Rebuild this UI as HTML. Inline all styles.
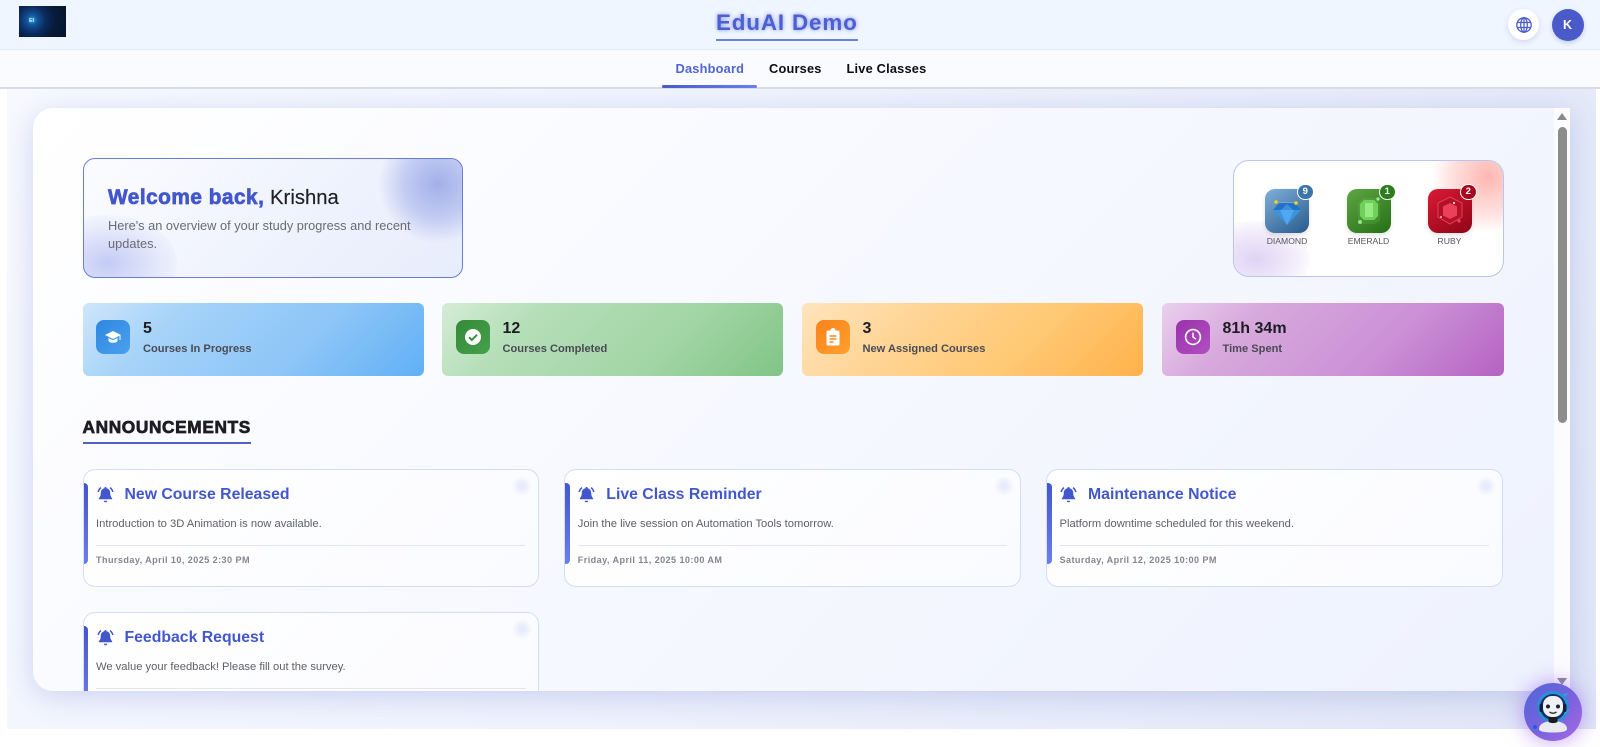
<!DOCTYPE html>
<html><head><meta charset="utf-8"><title>EduAI Demo</title>
<style>
*{box-sizing:border-box;margin:0;padding:0}
html,body{width:1600px;height:747px;overflow:hidden;background:#fff;font-family:"Liberation Sans",Arial,sans-serif;position:relative}
.a{position:absolute;white-space:nowrap}
#main{left:7px;top:88px;width:1589px;height:641px;background:linear-gradient(115deg,#f7f9ff 0%,#eef2fd 45%,#e0e6f6 100%)}
#hdr{left:0;top:0;width:1600px;height:50px;background:#f0f6ff;border-bottom:1px solid #e2e7f2}
#nav{left:0;top:50px;width:1600px;height:39px;background:#fafbff;border-bottom:2px solid #d9dce6}
#title{left:716px;top:9px;width:142px;height:32px;font-size:22.4px;font-weight:700;letter-spacing:.85px;color:#4d60cf;text-shadow:0 0 4px rgba(80,100,225,.7);border-bottom:2px solid #6b80e2;line-height:28px}
.nv{top:61px;font-size:12.8px;font-weight:700;letter-spacing:.2px;color:#0c0c12;line-height:16px}
#card{left:33px;top:108px;width:1537px;height:583px;border-radius:20px 0 0 20px;background:linear-gradient(135deg,#ffffff 0%,#f6f8ff 50%,#eef2fd 100%);box-shadow:0 6px 28px rgba(70,90,190,.22);overflow:hidden}
#sb{left:1554px;top:108px;width:16px;height:583px;background:#fcfcff}
#welcome{left:82.5px;top:158px;width:380px;height:120px;border:1px solid #6a7dd6;border-radius:12px;overflow:hidden;background:linear-gradient(135deg,#fbfcff 0%,#eef2fd 60%,#e8edfc 100%)}
#gems{left:1233px;top:160px;width:271px;height:116.5px;border:1px solid #b9c5ee;border-radius:16px;background:#fff;overflow:hidden}
.stat{top:303px;width:341px;height:73px;border-radius:6px}
.ic{position:absolute;left:13.5px;top:17px;width:34px;height:34px;border-radius:8px}
.ic svg{position:absolute;left:8px;top:8px}
.num{position:absolute;left:60.5px;top:15.5px;font-size:16px;font-weight:700;line-height:20px;color:#1c1c22;white-space:nowrap}
.lbl{position:absolute;left:60.5px;top:39px;font-size:11.1px;font-weight:700;letter-spacing:0;line-height:14px;color:#4a4a55;white-space:nowrap}
.ann{width:456.5px;height:117.5px;background:linear-gradient(135deg,#fff,#fafbff);border:1px solid #d3dcfb;border-radius:12px}
.ann .st{position:absolute;left:0;top:13px;width:4.5px;height:81px;background:linear-gradient(180deg,#4357cc,#6a7ef0);border-radius:0 4px 4px 0}
.ann .dot{position:absolute;right:6px;top:6px;width:20px;height:20px;border-radius:50%;background:radial-gradient(circle,rgba(100,115,225,.12) 20%,rgba(100,115,225,0) 72%)}
.ann svg{position:absolute;left:13px;top:16px}
.ann h3{position:absolute;left:41px;top:15px;font-size:15.8px;font-weight:700;line-height:20px;color:#4357cc;white-space:nowrap}
.ann p{position:absolute;left:12.5px;top:46.5px;font-size:11.2px;line-height:14px;color:#5e5e66;white-space:nowrap}
.ann hr{position:absolute;left:12.5px;right:12.5px;top:75px;border:0;border-top:1px solid #e2e4ee}
.ann small{position:absolute;left:12.5px;top:84px;font-size:9.1px;font-weight:700;letter-spacing:.42px;line-height:12px;color:#85858e;white-space:nowrap}
.gem{top:189px;width:44px;height:44px;border-radius:10px;box-shadow:0 2px 5px rgba(0,0,0,.12)}
.bd{top:183.5px;width:16.5px;height:16.5px;border-radius:50%;border:1px solid #fff;color:#fff;font-size:9.5px;font-weight:700;text-align:center;line-height:14.5px}
.gl{top:236px;width:70px;text-align:center;font-size:8.6px;line-height:11px;color:#55555c}
</style></head><body>

<div class="a" id="main"></div>
<div class="a" id="card"></div>
<div class="a" id="sb"></div>

<!-- scrollbar -->
<div class="a" style="left:1556.7px;top:113px;width:0;height:0;border-left:5.3px solid transparent;border-right:5.3px solid transparent;border-bottom:7.5px solid #8a8a8a"></div>
<div class="a" style="left:1557.5px;top:127px;width:9px;height:296px;background:#8c8c8c;border-radius:5px"></div>
<div class="a" style="left:1557px;top:678px;width:0;height:0;border-left:5px solid transparent;border-right:5px solid transparent;border-top:7px solid #8a8a8a"></div>

<!-- welcome -->
<div class="a" id="welcome">
  <div style="position:absolute;left:294px;top:-35px;width:120px;height:120px;border-radius:50%;background:radial-gradient(circle,rgba(90,110,215,.5) 0%,rgba(90,110,215,.28) 40%,rgba(90,110,215,0) 70%)"></div>
  <div style="position:absolute;left:-47px;top:56px;width:140px;height:96px;border-radius:50%;background:radial-gradient(ellipse,rgba(90,110,225,.32) 0%,rgba(90,110,225,.13) 45%,rgba(90,110,225,.03) 70%,rgba(90,110,225,0) 74%)"></div>
  <div class="a" style="left:24.5px;top:27px;font-size:20.3px;line-height:24px;color:#202024"><b style="color:#4357cc;-webkit-text-stroke:.7px #4357cc;letter-spacing:.5px;font-size:20.8px">Welcome back,</b> <span style="-webkit-text-stroke:.15px #202024">Krishna</span></div>
  <div class="a" style="left:24.5px;top:58px;font-size:12.8px;line-height:18px;color:#6b6b73;white-space:normal;width:325px">Here's an overview of your study progress and recent updates.</div>
</div>

<!-- gems -->
<div class="a" id="gems">
  <div style="position:absolute;left:199px;top:-39px;width:110px;height:110px;border-radius:50%;background:radial-gradient(circle,rgba(255,110,100,.5) 0%,rgba(255,120,110,.2) 50%,rgba(255,120,110,0) 72%)"></div>
  <div style="position:absolute;left:-34px;top:60px;width:110px;height:76px;border-radius:50%;background:radial-gradient(ellipse,rgba(150,110,220,.3) 0%,rgba(150,110,220,.13) 50%,rgba(150,110,220,.04) 70%,rgba(150,110,220,0) 73%)"></div>
</div>
<div class="a gem" style="left:1265px;background:linear-gradient(145deg,#7fb0d8,#27598d)">
  <svg width="44" height="44" viewBox="0 0 44 44"><path d="M14 14H30L36 21 22 36 8 21z" fill="#3c94e0"/><path d="M14 14H30L36 21H8z" fill="#2272c6"/><path d="M22 15L16 21H28z" fill="#3b8fdc"/><path d="M15 21H29L22 36z" fill="#52a8ee"/><path d="M11 13L31 14" stroke="#9bc0da" stroke-width=".5"/><circle cx="11" cy="13" r="1.8" fill="#f6d21f"/><circle cx="31" cy="14" r="1.8" fill="#f6d21f"/></svg>
</div>
<div class="a gem" style="left:1346.5px;background:linear-gradient(145deg,#5fa544,#256f17)">
  <svg width="44" height="44" viewBox="0 0 44 44"><path d="M16 9h12l5 5v18l-5 3H16l-5-3V14z" fill="#7ad465" opacity=".18"/><path d="M17 11h10l4 4v12l-4 4H17l-4-4V15z" fill="#6fd05a"/><path d="M18 14h8v14h-8z" fill="#96ec82"/><circle cx="13" cy="33" r="2" fill="#8fe87a"/><circle cx="31" cy="10" r="1.7" fill="#8fe87a"/></svg>
</div>
<div class="a gem" style="left:1428px;background:linear-gradient(145deg,#db1a35,#8d0516)">
  <svg width="44" height="44" viewBox="0 0 44 44"><path d="M22 8l12 6v14l-12 7-12-7V14z" fill="#b5102a" stroke="#e43f58" stroke-width="1"/><path d="M22 14l7 3.5v9L22 30l-7-3.5v-9z" fill="#ea4058"/><circle cx="26" cy="14" r="1" fill="#fff"/><circle cx="13" cy="28" r="1" fill="#fbb"/><circle cx="31" cy="32" r="1.6" fill="#f0405f"/></svg>
</div>
<div class="a bd" style="left:1297px;background:#3c75a8">9</div>
<div class="a bd" style="left:1379px;background:#2d7d1f">1</div>
<div class="a bd" style="left:1460px;background:#a8081d">2</div>
<div class="a gl" style="left:1252px">DIAMOND</div>
<div class="a gl" style="left:1333.5px">EMERALD</div>
<div class="a gl" style="left:1414.5px">RUBY</div>

<!-- stats -->
<div class="a stat" style="left:82.5px;background:linear-gradient(135deg,#cfe6fb 0%,#a6d3f8 25%,#8cc5f7 65%,#60b0f5 100%)">
  <div class="ic" style="background:linear-gradient(135deg,#2f86e0,#4ba1ee)"><svg width="18" height="18" viewBox="0 0 18 18"><path d="M9 3L1 7l8 4 8-4z" fill="#fff"/><path d="M4.5 10v2.6c0 1.2 2 2.2 4.5 2.2s4.5-1 4.5-2.2V10L9 12.2z" fill="#fff"/><path d="M16 7.500v4.500" stroke="#fff" stroke-width="1"/></svg></div>
  <div class="num">5</div><div class="lbl">Courses In Progress</div>
</div>
<div class="a stat" style="left:442px;background:linear-gradient(135deg,#d5ecd6 0%,#b5dfb8 25%,#a2d5a5 65%,#80c585 100%)">
  <div class="ic" style="background:linear-gradient(135deg,#338a38,#47a04c)"><svg width="18" height="18" viewBox="0 0 18 18"><circle cx="9" cy="9" r="8" fill="#fff"/><path d="M5 9.2l2.8 2.8L13 6.8" fill="none" stroke="#378f3c" stroke-width="2"/></svg></div>
  <div class="num">12</div><div class="lbl">Courses Completed</div>
</div>
<div class="a stat" style="left:802px;background:linear-gradient(135deg,#ffe4bd 0%,#ffd596 30%,#ffc873 65%,#ffb14a 100%)">
  <div class="ic" style="background:linear-gradient(135deg,#f9821a,#ffa02f)"><svg width="18" height="18" viewBox="0 0 18 18"><path d="M4 2.5h2.5a2.5 2.5 0 015 0H14a1.5 1.5 0 011.5 1.5v12a1.500 1.500 0 01-1.500 1.500H4A1.500 1.500 0 012.500 16V4A1.500 1.500 0 014 2.500z" fill="#fff"/><path d="M5.5 8h7M5.5 11h7M5.5 14h4" stroke="#f98a20" stroke-width="1.5"/></svg></div>
  <div class="num">3</div><div class="lbl">New Assigned Courses</div>
</div>
<div class="a stat" style="left:1162px;width:342px;background:linear-gradient(135deg,#ead0ee 0%,#d7a9dc 25%,#cb90d6 65%,#b562c2 100%)">
  <div class="ic" style="background:linear-gradient(135deg,#9a32ab,#b14fc0)"><svg width="18" height="18" viewBox="0 0 18 18"><circle cx="9" cy="9" r="7.4" fill="none" stroke="#fff" stroke-width="1.6"/><path d="M9 4.6V9l3 2.2" fill="none" stroke="#fff" stroke-width="1.5"/></svg></div>
  <div class="num">81h 34m</div><div class="lbl">Time Spent</div>
</div>

<!-- announcements heading -->
<div class="a" style="left:82.5px;top:416.5px;width:168.5px;height:27.5px;font-size:17.3px;font-weight:700;letter-spacing:.62px;line-height:20px;color:#1d1d22;-webkit-text-stroke:.7px #1d1d22;border-bottom:2px solid #4f62c8">ANNOUNCEMENTS</div>

<!-- announcement cards -->
<div class="a ann" style="left:82.5px;top:469px"><div class="st"></div><div class="dot"></div>
  <svg width="17" height="17" viewBox="0 0 17 17"><path d="M8.5 1a1.1 1.1 0 011.1 1.2c2.3.5 3.6 2.4 3.6 4.6 0 3.2 1 4.4 2 5.600v.9H1.800v-.9c1-1.200 2-2.400 2-5.600 0-2.200 1.300-4.100 3.600-4.600A1.100 1.100 0 018.500 1zM6.900 14.700h3.200a1.600 1.600 0 01-3.200 0z" fill="#4357cc"/><path d="M4 1.600C2.400 2.800 1.500 4.300 1.200 6M13 1.600c1.600 1.200 2.500 2.700 2.800 4.400" fill="none" stroke="#4357cc" stroke-width="1.500"/></svg>
  <h3>New Course Released</h3><p>Introduction to 3D Animation is now available.</p><hr><small>Thursday, April 10, 2025 2:30 PM</small></div>
<div class="a ann" style="left:564.3px;top:469px"><div class="st"></div><div class="dot"></div>
  <svg width="17" height="17" viewBox="0 0 17 17"><path d="M8.500 1a1.100 1.100 0 011.100 1.200c2.300.5 3.600 2.400 3.600 4.600 0 3.200 1 4.400 2 5.600v.9H1.800v-.9c1-1.200 2-2.400 2-5.600 0-2.200 1.300-4.100 3.600-4.600A1.100 1.100 0 018.500 1zM6.900 14.700h3.200a1.600 1.600 0 01-3.200 0z" fill="#4357cc"/><path d="M4 1.600C2.400 2.800 1.500 4.300 1.200 6M13 1.600c1.600 1.200 2.500 2.700 2.800 4.400" fill="none" stroke="#4357cc" stroke-width="1.500"/></svg>
  <h3>Live Class Reminder</h3><p>Join the live session on Automation Tools tomorrow.</p><hr><small>Friday, April 11, 2025 10:00 AM</small></div>
<div class="a ann" style="left:1046px;top:469px"><div class="st"></div><div class="dot"></div>
  <svg width="17" height="17" viewBox="0 0 17 17"><path d="M8.500 1a1.100 1.100 0 011.100 1.200c2.300.5 3.600 2.400 3.600 4.600 0 3.200 1 4.400 2 5.600v.9H1.800v-.9c1-1.200 2-2.400 2-5.600 0-2.200 1.300-4.100 3.600-4.600A1.100 1.100 0 018.500 1zM6.900 14.700h3.200a1.600 1.600 0 01-3.200 0z" fill="#4357cc"/><path d="M4 1.600C2.400 2.800 1.500 4.300 1.200 6M13 1.600c1.600 1.200 2.500 2.700 2.800 4.400" fill="none" stroke="#4357cc" stroke-width="1.500"/></svg>
  <h3>Maintenance Notice</h3><p>Platform downtime scheduled for this weekend.</p><hr><small>Saturday, April 12, 2025 10:00 PM</small></div>
<div class="a" style="left:82.5px;top:612px;width:456.5px;height:79px;overflow:hidden">
  <div class="a ann" style="left:0;top:0"><div class="st"></div><div class="dot"></div>
  <svg width="17" height="17" viewBox="0 0 17 17"><path d="M8.500 1a1.100 1.100 0 011.100 1.200c2.300.5 3.600 2.400 3.600 4.600 0 3.200 1 4.400 2 5.600v.9H1.800v-.9c1-1.200 2-2.400 2-5.600 0-2.200 1.300-4.100 3.600-4.600A1.100 1.100 0 018.500 1zM6.900 14.700h3.200a1.600 1.600 0 01-3.200 0z" fill="#4357cc"/><path d="M4 1.600C2.400 2.800 1.500 4.300 1.200 6M13 1.600c1.600 1.200 2.500 2.700 2.800 4.400" fill="none" stroke="#4357cc" stroke-width="1.500"/></svg>
  <h3>Feedback Request</h3><p>We value your feedback! Please fill out the survey.</p><hr></div>
</div>

<!-- header -->
<div class="a" id="hdr"></div>
<div class="a" style="left:19px;top:6px;width:47px;height:31px;background:radial-gradient(circle at 28% 45%,#2d9ad6 0%,#11549a 14%,#0b2a5c 36%,#071a38 62%,#06152c 100%)"><div style="position:absolute;left:10px;top:11px;font-size:5.5px;font-weight:700;color:#cfeefa;line-height:8px">EI</div></div>
<div class="a" id="title">EduAI Demo</div>
<div class="a" style="left:1508px;top:9px;width:31px;height:31px;border-radius:50%;background:#fff;box-shadow:0 2px 6px rgba(60,80,160,.18)">
  <svg style="position:absolute;left:7.5px;top:7.5px" width="16" height="16" viewBox="0 0 16 16" fill="none" stroke="#4a5bc9" stroke-width="1.3"><circle cx="8" cy="8" r="7.2"/><ellipse cx="8" cy="8" rx="3.3" ry="7.2"/><path d="M1.300 5.500h13.400M1.300 10.500h13.400M8 .8v14.400"/></svg>
</div>
<div class="a" style="left:1551.5px;top:8.5px;width:32px;height:32px;border-radius:50%;background:#4a5bc9;box-shadow:0 2px 5px rgba(60,80,160,.25);color:#fff;font-size:12.5px;font-weight:700;text-align:center;line-height:32px">K</div>

<!-- nav -->
<div class="a" id="nav"></div>
<div class="a nv" style="left:675.5px;color:#5064d2">Dashboard</div>
<div class="a nv" style="left:769px">Courses</div>
<div class="a nv" style="left:846.5px">Live Classes</div>
<div class="a" style="left:662px;top:84.5px;width:94.5px;height:3px;border-radius:2px;background:linear-gradient(90deg,#4a5bc9,#6a7ef0)"></div>

<!-- chatbot -->
<div class="a" style="left:1524px;top:683px;width:58px;height:58px;border-radius:50%;background:linear-gradient(135deg,#4f65d8 0%,#7a62dd 55%,#a86ae6 100%);box-shadow:0 0 22px rgba(150,90,240,.6)">
  <svg width="58" height="58" viewBox="0 0 58 58">
    <path d="M45 10L37 17 35 12z" fill="#3ea0dc"/>
    <circle cx="29" cy="24" r="14.5" fill="none" stroke="#2a8fd8" stroke-width="3"/>
    <circle cx="29" cy="24" r="13" fill="#12326a"/>
    <path d="M46 26l-6 7 1-6z" fill="#3ea0dc"/>
    <circle cx="11" cy="44" r="2" fill="#1d5fd6"/>
    <path d="M15 46c0-5 6-8 14-8s14 3 14 8c0 2.5-6 3.500-14 3.500S15 48.500 15 46z" fill="#e8eaef"/>
    <path d="M24.500 33h9v6c-3 1.500-6 1.500-9 0z" fill="#1a1a22"/>
    <rect x="19" y="13" width="20" height="21" rx="9" fill="#eff1f4"/>
    <rect x="15.500" y="21" width="3.500" height="8" rx="1.500" fill="#16203c"/>
    <rect x="39" y="21" width="3.500" height="8" rx="1.500" fill="#16203c"/>
    <circle cx="24" cy="23.500" r="2" fill="#20242e"/><circle cx="34" cy="23.500" r="2" fill="#20242e"/>
    <path d="M25.500 29q3.500 2.500 7 0" stroke="#30343e" stroke-width="1.400" fill="none"/>
  </svg>
</div>
</body></html>
